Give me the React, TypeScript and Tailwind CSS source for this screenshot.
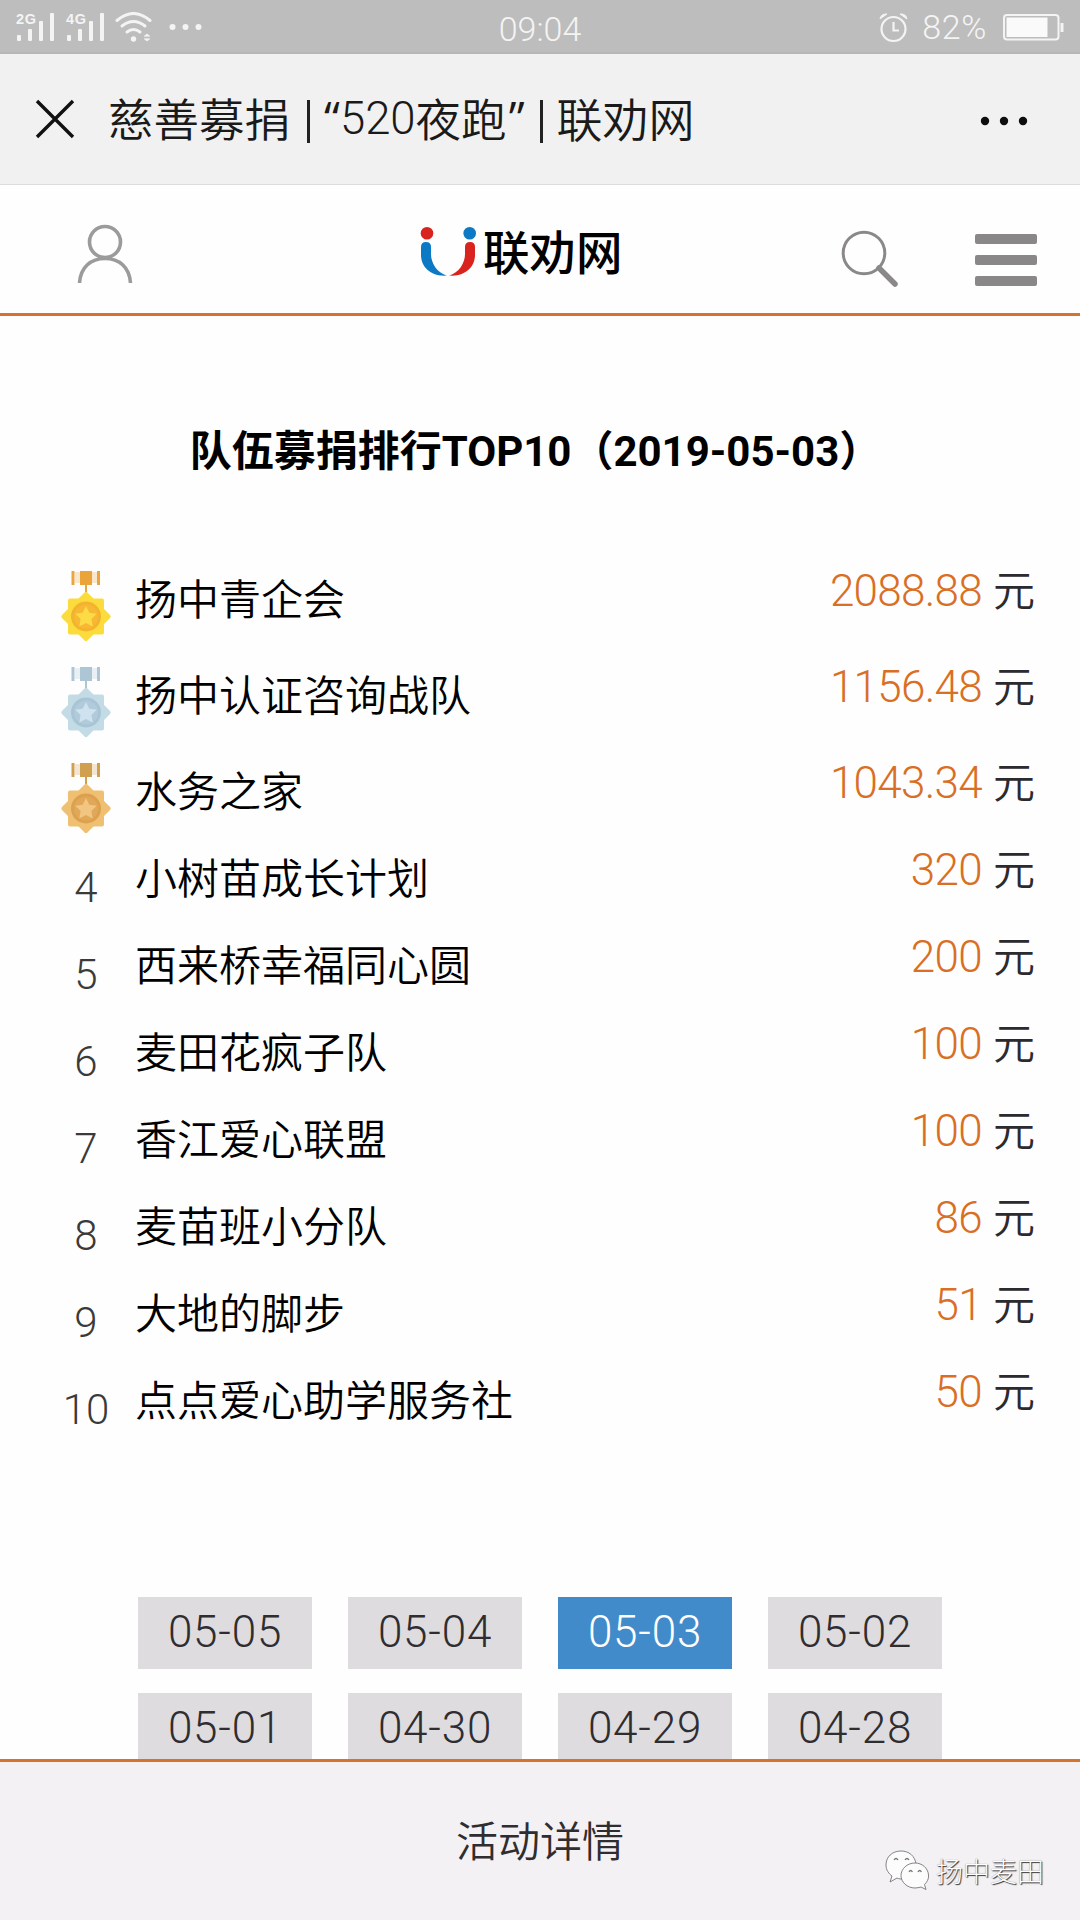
import { clsx } from "clsx";

type Team = {
  rank: number;
  name: string;
  amount: string;
};

const teams: Team[] = [
  { rank: 1, name: "扬中青企会", amount: "2088.88" },
  { rank: 2, name: "扬中认证咨询战队", amount: "1156.48" },
  { rank: 3, name: "水务之家", amount: "1043.34" },
  { rank: 4, name: "小树苗成长计划", amount: "320" },
  { rank: 5, name: "西来桥幸福同心圆", amount: "200" },
  { rank: 6, name: "麦田花疯子队", amount: "100" },
  { rank: 7, name: "香江爱心联盟", amount: "100" },
  { rank: 8, name: "麦苗班小分队", amount: "86" },
  { rank: 9, name: "大地的脚步", amount: "51" },
  { rank: 10, name: "点点爱心助学服务社", amount: "50" },
];

const dates = ["05-05", "05-04", "05-03", "05-02", "05-01", "04-30", "04-29", "04-28"];
const activeDate = "05-03";

const medalColors = [
  { ribbon: "#eba53a", star: "#fbdc3c", ring: "#f3b32e", core: "#f7b834", inner: "#fddb46" },
  { ribbon: "#adc6d6", star: "#c3dbe5", ring: "#a9c4d5", core: "#b1cbdb", inner: "#cfe2f0" },
  { ribbon: "#d0a050", star: "#efbf72", ring: "#dca04f", core: "#e0a858", inner: "#f2c581" },
];

function Signal({ label }: { label: string }) {
  return (
    <svg className="h-[30px] w-[40px]" viewBox="0 0 40 30" fill="#f4f4f4">
      <text x="0" y="12" fontSize="14.5" fontWeight="700" fontFamily="Liberation Sans, sans-serif" textLength="20">
        {label}
      </text>
      <rect x="1" y="23" width="4" height="6" rx="1" />
      <rect x="12" y="17" width="4" height="12" rx="1" />
      <rect x="23" y="9" width="4" height="20" rx="1" />
      <rect x="34" y="1" width="4" height="28" rx="1" />
    </svg>
  );
}

function StatusBar() {
  return (
    <div className="grid h-[54px] shrink-0 grid-cols-3 border-b-2 border-[#b8b6b6] bg-[#bdbdbd] font-[Roboto,sans-serif] font-[350] text-[#f4f4f4]">
      <div className="flex items-start pt-3 pl-4">
        <Signal label="2G" />
        <div className="ml-[10px]">
          <Signal label="4G" />
        </div>
        <svg className="ml-[9px] h-[30px] w-[38px]" viewBox="0 0 38 30" fill="none" stroke="#f4f4f4" strokeWidth="3" strokeLinecap="round">
          <path d="M2 8.5 Q18.500 -5.500 35 8.500" />
          <path d="M7 14 Q18.500 5 30 14" />
          <path d="M12 20 Q18.500 15 25 20" />
          <circle cx="18.500" cy="27" r="2.700" fill="#f4f4f4" stroke="none" />
          <path d="M29.500 24 L32 22 L34.500 24 Z M29.500 27 L32 29 L34.500 27 Z" strokeWidth="0.800" fill="#f4f4f4" />
        </svg>
        <svg className="ml-4 h-[30px] w-[34px]" viewBox="0 0 34 30" fill="#f4f4f4">
          <circle cx="3.500" cy="15" r="3" />
          <circle cx="16.500" cy="15" r="3" />
          <circle cx="29.500" cy="15" r="3" />
        </svg>
      </div>
      <div className="pt-1 text-center text-[34px] leading-[51px]">09:04</div>
      <div className="flex items-start justify-end pr-4">
        <svg className="mt-3 h-[31px] w-[29px]" viewBox="0 0 29 31" fill="none" stroke="#f4f4f4" strokeWidth="2.200">
          <circle cx="14.500" cy="17" r="12" />
          <path d="M14.500 10 V18.500 H20" />
          <path d="M1 7 Q2 1.500 8 2 Z M28 7 Q27 1.500 21 2 Z" fill="#f4f4f4" strokeWidth="1" />
        </svg>
        <span className="ml-[14px] text-[34px] leading-[55px] tracking-[0.6px]">82%</span>
        <svg className="mt-[13px] ml-4 h-[28px] w-[61px]" viewBox="0 0 61 28">
          <rect x="1" y="2" width="54.500" height="24.500" rx="3" fill="none" stroke="#f4f4f4" strokeWidth="2" />
          <rect x="3.500" y="4.500" width="41" height="19.500" fill="#fafafa" />
          <rect x="57.500" y="10" width="3" height="9" fill="#f4f4f4" />
        </svg>
      </div>
    </div>
  );
}

function TitleBar() {
  return (
    <div className="flex h-[131px] shrink-0 items-center border-b border-[#dcdcdc] bg-[#f1f1f1] pl-[35px] text-[45.5px] font-[350] text-[#1a1a1a]">
      <svg className="h-10 w-10" viewBox="0 0 40 40" stroke="#111" strokeWidth="3.400">
        <path d="M2 2 L38 38 M38 2 L2 38" />
      </svg>
      <h1 className="ml-[33px] flex items-center pb-1 whitespace-nowrap">
        <span>慈善募捐</span>
        <span className="mt-2 ml-[17px] h-[43px] w-[3px] bg-[#222]" />
        <span className="ml-[14px] font-['Open_Sans'] font-normal">“</span>
        <span className="mt-1 font-[Roboto,sans-serif]">520</span>
        <span>夜跑</span>
        <span className="ml-[2px] font-['Open_Sans'] font-normal">”</span>
        <span className="mt-2 ml-[15px] h-[43px] w-[3px] bg-[#222]" />
        <span className="ml-[14px] text-[46px]">联劝网</span>
      </h1>
      <svg className="mt-[3px] mr-[52px] ml-auto h-[10px] w-[48px]" viewBox="0 0 48 10" fill="#0d0d0d">
        <circle cx="5" cy="5" r="4.200" />
        <circle cx="24" cy="5" r="4.200" />
        <circle cx="43" cy="5" r="4.200" />
      </svg>
    </div>
  );
}

function SiteHeader() {
  return (
    <header className="flex h-[131px] shrink-0 items-start border-b-3 border-[#d6742c] pl-[77px]">
      <svg className="mt-[39px] h-[60px] w-[56px]" viewBox="0 0 56 60" fill="none" stroke="#9b9b9b" strokeWidth="3.600">
        <circle cx="28" cy="18" r="15.500" />
        <path d="M2.500 59 C3.500 43 14 34.500 28 34.500 C42 34.500 52.500 43 53.500 59" />
      </svg>
      <svg className="mt-[40px] ml-[287px] h-[52px] w-[56px]" viewBox="0 0 56 52">
        <circle cx="7" cy="8.300" r="6.300" fill="#d9231f" />
        <circle cx="49.700" cy="8.300" r="6.300" fill="#0c79c4" />
        <path d="M1 22 Q1 17 6 17 Q11 17 11 22 V29 C11 38 17 48 27 50.500 C11 52 1 42 1 30 Z" fill="#0c79c4" />
        <path d="M55 22 Q55 17 50 17 Q45 17 45 22 V29 C45 38 39 48 29 50.500 C45 52 55 42 55 30 Z" fill="#d9231f" />
      </svg>
      <span className="mt-[32px] ml-[7px] w-[139px] text-[46.5px] leading-[66px] font-medium whitespace-nowrap text-black">
        联劝网
      </span>
      <svg className="mt-[45px] ml-[219px] h-[58px] w-[58px]" viewBox="0 0 58 58" fill="none" stroke="#8b8889">
        <circle cx="23" cy="23" r="20.800" strokeWidth="3" />
        <path d="M38 38 L54 54" strokeWidth="5.500" strokeLinecap="round" />
      </svg>
      <div className="mt-[49px] ml-[76px] flex flex-col gap-[11px]">
        <span className="h-[10px] w-[62px] rounded-xs bg-[#8a8788]" />
        <span className="h-[10px] w-[62px] rounded-xs bg-[#8a8788]" />
        <span className="h-[10px] w-[62px] rounded-xs bg-[#8a8788]" />
      </div>
    </header>
  );
}

function Medal({ rank }: { rank: number }) {
  const c = medalColors[rank - 1];

  return (
    <svg className="mt-[11px] h-[74px] w-[54px]" viewBox="0 0 54 74">
      <g fill={c.ribbon}>
        <rect x="12.500" y="1" width="3" height="14" />
        <rect x="21" y="1" width="12" height="14" />
        <rect x="38" y="1" width="3" height="14" />
        <rect x="16" y="2" width="22" height="11" opacity="0.25" />
        <rect x="26" y="15" width="2" height="7" />
      </g>
      <rect x="9" y="28.500" width="36" height="36" rx="2" fill={c.star} />
      <rect x="9" y="28.500" width="36" height="36" rx="2" fill={c.star} transform="rotate(45 27 46.500)" />
      <circle cx="27" cy="46.500" r="15" fill={c.ring} />
      <circle cx="27" cy="46.500" r="12" fill={c.core} />
      <path
        d="M27 36 L30.300 42.800 L37.800 43.800 L32.400 49 L33.700 56.500 L27 52.900 L20.300 56.500 L21.600 49 L16.200 43.800 L23.700 42.800 Z"
        fill={c.inner}
      />
    </svg>
  );
}

function TeamRow({ team }: { team: Team }) {
  const hasMedal = team.rank <= 3;

  return (
    <li className={clsx("flex items-start pr-[45px] pl-[58px]", hasMedal ? "h-24 pt-[9px]" : "h-[87px]")}>
      <div className="flex w-[56px] justify-center font-[Roboto,sans-serif] text-[#3a3a3a]">
        {hasMedal ? <Medal rank={team.rank} /> : <span className="leading-[99px]">{team.rank}</span>}
      </div>
      <span className="ml-[21px] flex-1 leading-[75px] text-black">{team.name}</span>
      <span className="font-[Roboto,sans-serif] text-[44px] leading-[65px] tracking-[-0.7px] text-[#d96f24]">
        {team.amount}
      </span>
      <span className="ml-[11px] leading-[57px] text-[#2b2a2e]">元</span>
    </li>
  );
}

function Watermark() {
  return (
    <div className="absolute top-[86px] right-[36px] flex items-center gap-[6px]">
      <svg className="h-[42px] w-[46px]" viewBox="0 0 46 42" fill="#fcfcfc" stroke="#77757a" strokeWidth="0.900">
        <path d="M17 2 C8 2 2 8 2 16 C2 21 5 25 8 27 L6 33 L13 29 C15 30 17 30 19 30 C28 30 33 23 32 15 C31 7 25 2 17 2 Z" />
        <path d="M31 14 C23 14 17 20 17 26.500 C17 33 23 39 31 39 C33 39 35 38.500 37 38 L42 40.500 L40.500 35.500 C43 33 45 30 44.500 26 C44 19 38 14 31 14 Z" />
        <path d="M10 11 q2 -3 4 0 M21 11 q2 -3 4 0 M25 23 q1.700 -3 3.400 0 M34 23 q1.700 -3 3.400 0" fill="none" strokeWidth="1.300" />
      </svg>
      <span className="pt-[2px] text-[27px] leading-[42px] font-light text-white [text-shadow:1px_1px_1px_#333,0_0_1px_#777]">扬中麦田</span>
    </div>
  );
}

export default function App() {
  return (
    <div className="flex h-[1920px] w-[1080px] flex-col overflow-hidden bg-[#fefefe] font-['Noto_Sans_CJK_SC',sans-serif]">
      <StatusBar />
      <TitleBar />
      <SiteHeader />

      <main className="min-h-0 flex-1 overflow-hidden">
        <h2 className="pt-[105px] pr-[9px] text-center font-[Roboto,'Noto_Sans_CJK_SC',sans-serif] text-[42px] leading-[62px] font-bold text-black">
          队伍募捐排行TOP10（2019-05-03）
        </h2>
        <ol className="mt-[67px] text-[42px] font-[350]">
          {teams.map((team) => (
            <TeamRow key={team.rank} team={team} />
          ))}
        </ol>
        <div className="mt-[150px] ml-[138px] grid w-[804px] grid-cols-4 gap-x-9 gap-y-6 font-[Roboto,sans-serif] text-[44px] font-[350]">
          {dates.map((date) => (
            <button
              key={date}
              type="button"
              className={clsx(
                "h-[72px] pb-[2px] text-center leading-[70px] tracking-[0.8px]",
                date === activeDate ? "bg-[#428bca] text-white" : "bg-[#dedcdf] text-[#2f2d30]",
              )}
            >
              {date}
            </button>
          ))}
        </div>
      </main>

      <footer className="relative h-[161px] shrink-0 border-t-3 border-[#d6742c] bg-[#f3f1f4] text-center text-[42px] leading-[154px] font-[350] text-[#2f2d30]">
        活动详情
        <Watermark />
      </footer>
    </div>
  );
}
